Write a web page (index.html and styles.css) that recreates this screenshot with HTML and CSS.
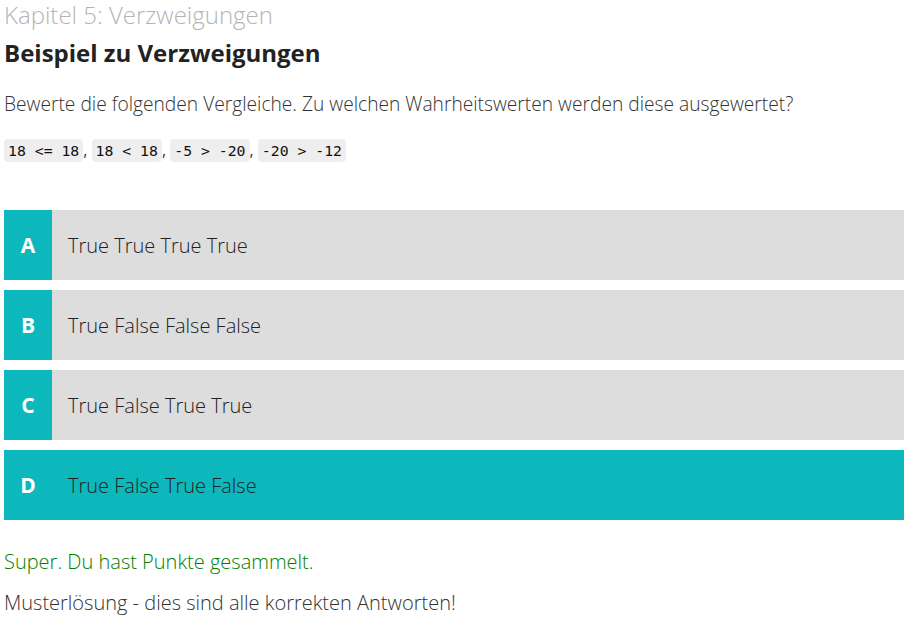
FILE: index.html
```html
<!DOCTYPE html>
<html lang="de">
<head>
<meta charset="utf-8">
<title>Beispiel zu Verzweigungen</title>
<link rel="stylesheet" href="styles.css">
</head>
<body>
<div class="page">
  <div class="chapter">Kapitel 5: Verzweigungen</div>
  <h1 class="title">Beispiel zu Verzweigungen</h1>
  <p class="question">Bewerte die folgenden Vergleiche. Zu welchen Wahrheitswerten werden diese ausgewertet?</p>
  <p class="codes"><code>18 &lt;= 18</code>, <code>18 &lt; 18</code>, <code>-5 &gt; -20</code>, <code>-20 &gt; -12</code></p>
  <div class="options">
    <div class="option"><div class="letter">A</div><div class="answer">True True True True</div></div>
    <div class="option"><div class="letter">B</div><div class="answer">True False False False</div></div>
    <div class="option"><div class="letter">C</div><div class="answer">True False True True</div></div>
    <div class="option selected"><div class="letter">D</div><div class="answer">True False True False</div></div>
  </div>
  <p class="feedback">Super. Du hast Punkte gesammelt.</p>
  <p class="solution">Musterlösung - dies sind alle korrekten Antworten!</p>
</div>
</body>
</html>
```
FILE: styles.css
```css
html, body {
  margin: 0;
  padding: 0;
  background: #fff;
}
body {
  font-family: "Open Sans", "Noto Sans", sans-serif;
  color: #333;
}
.page {
  padding: 0 12px 0 4px;
}
.chapter {
  font-size: 24px;
  font-weight: 300;
  color: #b4b4b4;
  line-height: 30px;
}
.title {
  font-size: 24px;
  font-weight: 700;
  margin: 5px 0 0;
  line-height: 36px;
  color: #222;
}
.question {
  font-size: 19.2px;
  font-weight: 300;
  margin: 19px 0 0;
  line-height: 28px;
}
.codes {
  margin: 20px 0 0;
  font-size: 16px;
  line-height: 24px;
}
.codes code {
  font-family: "DejaVu Sans Mono", monospace;
  font-size: 14.8px;
  color: #111;
  background: #eee;
  border-radius: 4px;
  padding: 3px 4px;
}
.options {
  margin-top: 47px;
  display: flex;
  flex-direction: column;
  gap: 10px;
}
.option {
  display: flex;
  height: 70px;
  background: #ddd;
  align-items: stretch;
}
.option .letter {
  width: 48px;
  background: #0cb8bc;
  color: #fff;
  font-weight: 700;
  font-size: 21px;
  display: flex;
  align-items: center;
  justify-content: center;
}
.option .answer {
  display: flex;
  align-items: center;
  padding-left: 16px;
  font-size: 20px;
  font-weight: 300;
  color: #222;
}
.option.selected {
  background: #0cb8bc;
}
.feedback {
  margin: 28px 0 0;
  font-size: 20px;
  font-weight: 300;
  color: #008000;
  line-height: 28px;
}
.solution {
  margin: 13px 0 0;
  font-size: 20px;
  font-weight: 300;
  line-height: 28px;
}
```
